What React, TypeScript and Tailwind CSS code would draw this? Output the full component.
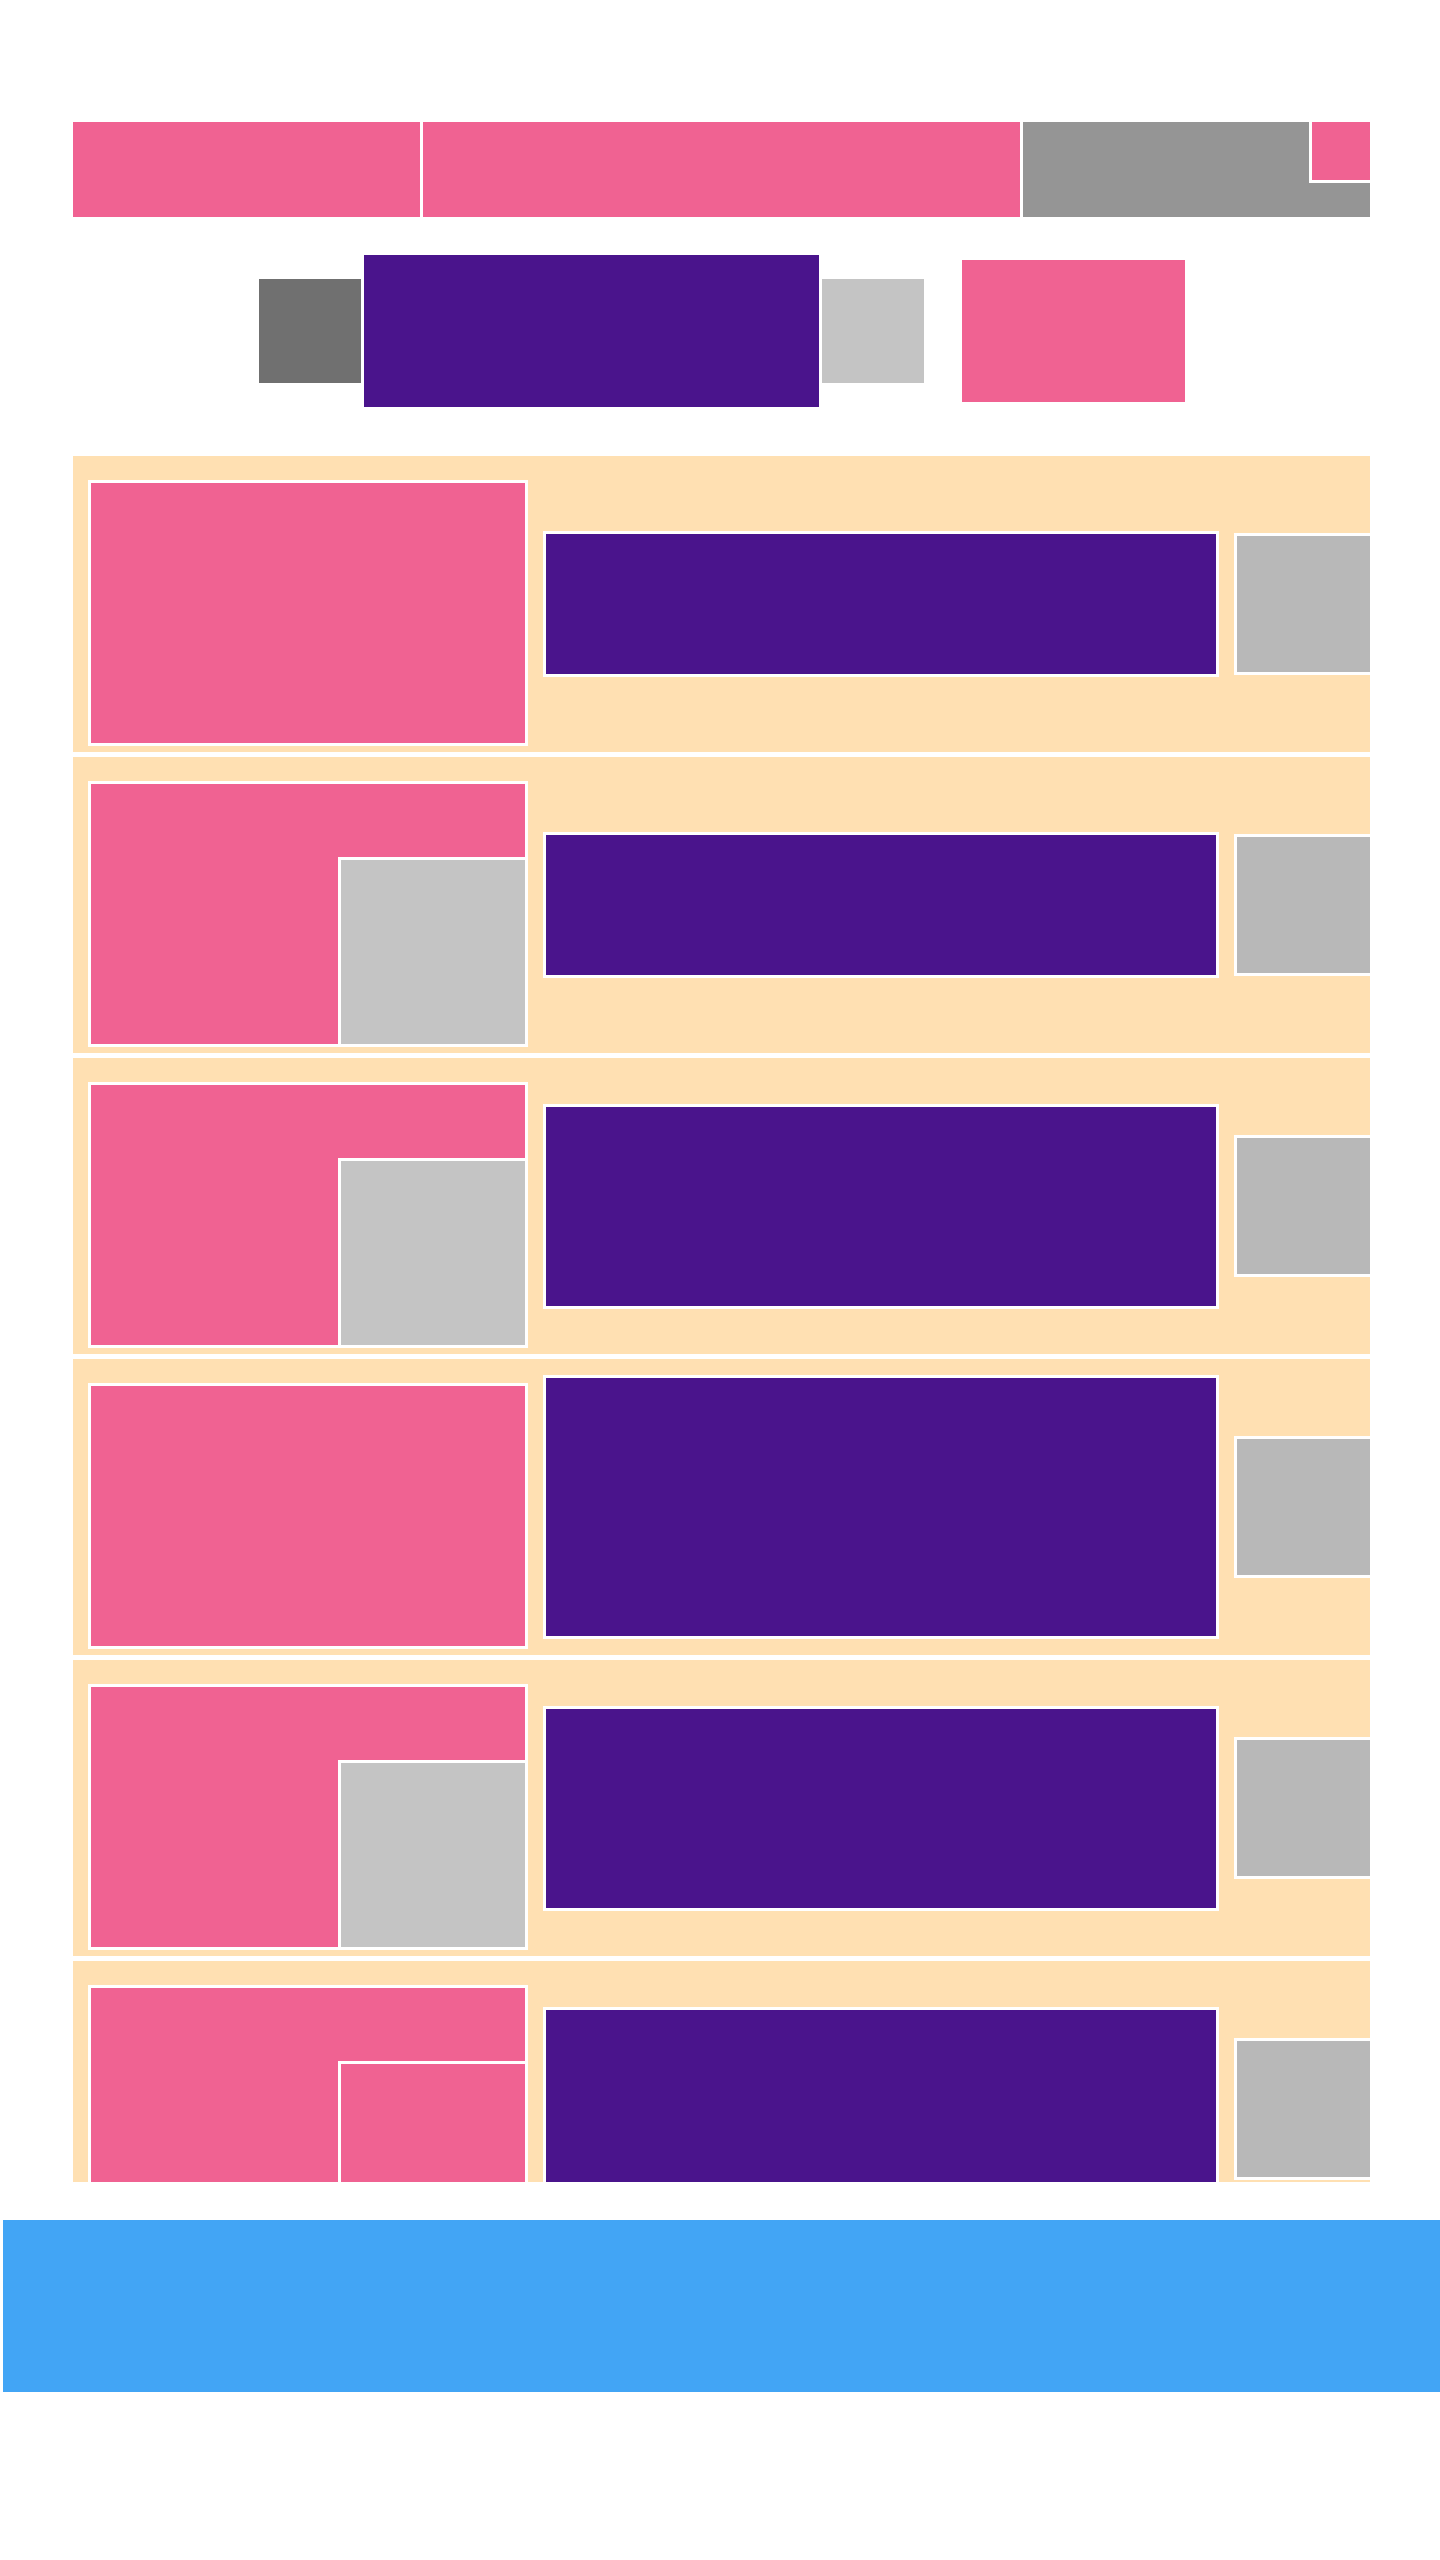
const rows = [
  { inner: "none", purple: "h-[146px]" },
  { inner: "grey", purple: "h-[146px]" },
  { inner: "grey", purple: "h-[205px]" },
  { inner: "none", purple: "h-[264px]" },
  { inner: "grey", purple: "h-[205px]" },
  { inner: "pink", purple: "h-[205px]" },
];

function Row({ inner, purple }: { inner: string; purple: string }) {
  return (
    <div className="flex h-[296px] shrink-0 items-center gap-[15px] overflow-hidden bg-[#FFE0B2] pl-[15px]">
      {/* card with optional corner tile */}
      <div className="mt-[24px] flex h-[266px] w-[440px] shrink-0 items-end justify-end self-start border-[3px] border-white bg-[#F06292]">
        {inner === "grey" && (
          <div className="-m-[3px] h-[190px] w-[190px] border-[3px] border-white bg-[#C4C4C4]" />
        )}
        {inner === "pink" && (
          <div className="-m-[3px] h-[190px] w-[190px] border-[3px] border-white bg-[#F06292]" />
        )}
      </div>
      <div className={`w-[676px] shrink-0 border-[3px] border-white bg-[#4A148C] ${purple}`} />
      <div className="h-[142px] w-[142px] shrink-0 border-[3px] border-white bg-[#B8B8B8]" />
    </div>
  );
}

export default function App() {
  return (
    <div className="min-h-[2560px] bg-white pt-[122px]">
      <div className="ml-[73px] w-[1297px]">
        {/* top bar */}
        <div className="flex h-[95px] gap-[3px]">
          <div className="w-[347px] bg-[#F06292]" />
          <div className="w-[597px] bg-[#F06292]" />
          <div className="flex w-[347px] items-start justify-end bg-[#959595]">
            <div className="h-[61px] w-[61px] border-b-[3px] border-l-[3px] border-white bg-[#F06292]" />
          </div>
        </div>

        {/* middle strip */}
        <div className="mt-[38px] flex h-[152px] items-center justify-center gap-[3px]">
          <div className="h-[104px] w-[102px] bg-[#707070]" />
          <div className="h-[152px] w-[455px] bg-[#4A148C]" />
          <div className="h-[104px] w-[102px] bg-[#C4C4C4]" />
          <div className="ml-[35px] h-[142px] w-[223px] bg-[#F06292]" />
        </div>

        {/* list */}
        <div className="mt-[49px] flex h-[1726px] flex-col gap-[5px] overflow-hidden">
          {rows.map((r, i) => (
            <Row key={i} inner={r.inner} purple={r.purple} />
          ))}
        </div>
      </div>

      <div className="ml-[3px] mt-[38px] h-[172px] bg-[#42A5F5]" />
    </div>
  );
}
